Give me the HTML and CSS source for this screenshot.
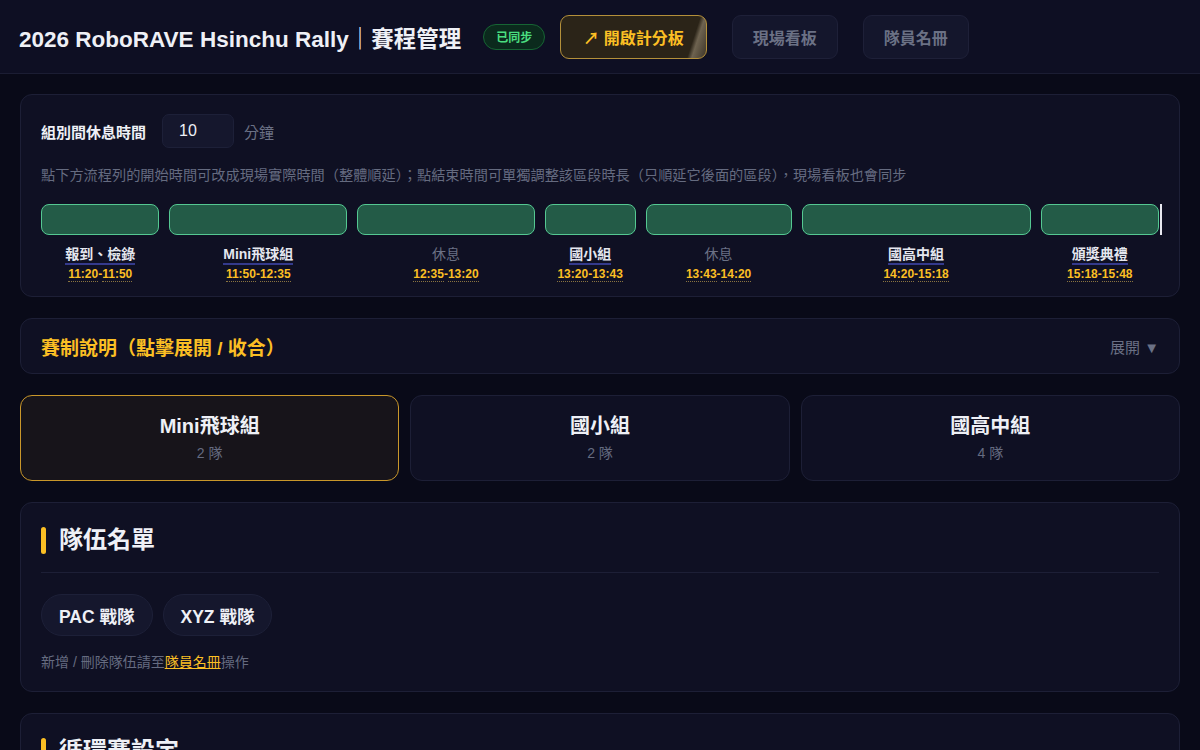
FILE: index.html
```html
<!DOCTYPE html>
<html lang="zh-Hant">
<head>
<meta charset="utf-8">
<title>賽程管理</title>
<link rel="stylesheet" href="styles.css">
</head>
<body>
<header class="topbar">
  <h1 class="title">2026 RoboRAVE Hsinchu Rally｜賽程管理</h1>
  <span class="sync-badge">已同步</span>
  <button class="btn btn-gold">↗ 開啟計分板</button>
  <button class="btn btn-muted">現場看板</button>
  <button class="btn btn-muted">隊員名冊</button>
</header>

<main class="main">
  <section class="card schedule">
    <div class="break-row">
      <span class="break-label">組別間休息時間</span>
      <input class="break-input" type="text" value="10">
      <span class="break-unit">分鐘</span>
    </div>
    <p class="hint">點下方流程列的開始時間可改成現場實際時間（整體順延）；點結束時間可單獨調整該區段時長（只順延它後面的區段），現場看板也會同步</p>
    <div class="timeline">
      <div class="seg" style="flex-grow:30">
        <div class="bar"></div>
        <div class="seg-name">報到、檢錄</div>
        <div class="seg-time"><span>11:20</span>-<span>11:50</span></div>
      </div>
      <div class="seg" style="flex-grow:45">
        <div class="bar"></div>
        <div class="seg-name">Mini飛球組</div>
        <div class="seg-time"><span>11:50</span>-<span>12:35</span></div>
      </div>
      <div class="seg" style="flex-grow:45">
        <div class="bar"></div>
        <div class="seg-name rest">休息</div>
        <div class="seg-time"><span>12:35</span>-<span>13:20</span></div>
      </div>
      <div class="seg" style="flex-grow:23">
        <div class="bar"></div>
        <div class="seg-name">國小組</div>
        <div class="seg-time"><span>13:20</span>-<span>13:43</span></div>
      </div>
      <div class="seg" style="flex-grow:37">
        <div class="bar"></div>
        <div class="seg-name rest">休息</div>
        <div class="seg-time"><span>13:43</span>-<span>14:20</span></div>
      </div>
      <div class="seg" style="flex-grow:58">
        <div class="bar"></div>
        <div class="seg-name">國高中組</div>
        <div class="seg-time"><span>14:20</span>-<span>15:18</span></div>
      </div>
      <div class="seg" style="flex-grow:30">
        <div class="bar"></div>
        <div class="seg-name">頒獎典禮</div>
        <div class="seg-time"><span>15:18</span>-<span>15:48</span></div>
      </div>
      <div class="now-marker"></div>
    </div>
  </section>

  <section class="card collapse">
    <span class="collapse-title">賽制說明（點擊展開 / 收合）</span>
    <span class="collapse-toggle">展開 ▼</span>
  </section>

  <div class="groups">
    <div class="group active">
      <div class="group-name">Mini飛球組</div>
      <div class="group-count">2 隊</div>
    </div>
    <div class="group">
      <div class="group-name">國小組</div>
      <div class="group-count">2 隊</div>
    </div>
    <div class="group">
      <div class="group-name">國高中組</div>
      <div class="group-count">4 隊</div>
    </div>
  </div>

  <section class="card teams">
    <h2 class="section-title">隊伍名單</h2>
    <div class="divider"></div>
    <div class="chips">
      <span class="chip">PAC 戰隊</span>
      <span class="chip">XYZ 戰隊</span>
    </div>
    <p class="note">新增 / 刪除隊伍請至<a class="link" href="#">隊員名冊</a>操作</p>
  </section>

  <section class="card teams">
    <h2 class="section-title">循環賽設定</h2>
  </section>
</main>
</body>
</html>
```

FILE: styles.css
```css
* { box-sizing: border-box; }

html, body {
  margin: 0;
  background: #090a18;
  color: #e5e7eb;
  font-family: "Liberation Sans", "Noto Sans CJK TC", sans-serif;
  overflow: hidden;
}

.topbar {
  height: 74px;
  display: flex;
  align-items: center;
  padding: 0 19px;
  background: #0e0f23;
  border-bottom: 1px solid #1b1d33;
}

.title {
  margin: 0;
  font-size: 22.5px;
  font-weight: 700;
  color: #eef0f6;
}

.sync-badge {
  margin-left: 22px;
  height: 26px;
  padding: 0 12px;
  display: inline-flex;
  align-items: center;
  border-radius: 13px;
  border: 1px solid #166534;
  background: #0b2a1d;
  color: #4ade80;
  font-size: 12px;
  font-weight: 700;
}

.btn {
  height: 44px;
  padding: 0 20px;
  border-radius: 9px;
  font-family: inherit;
  font-size: 16px;
  font-weight: 700;
  cursor: pointer;
}

.btn-gold {
  margin-left: 15px;
  padding: 0 22px;
  border: 1.5px solid #b4903a;
  color: #fbbf24;
  background: linear-gradient(108deg, #2b2418 0%, #2b2418 88%, #6e6350 91%, #3d3528 100%);
}

.btn-muted {
  margin-left: 25px;
  border: 1px solid #1e2038;
  background: #14162c;
  color: #6b7185;
}

.main {
  padding: 20px 20px 0;
  display: flex;
  flex-direction: column;
  gap: 21px;
}

.card {
  background: #0f1023;
  border: 1px solid #1d1f36;
  border-radius: 12px;
}

.schedule {
  padding: 19px 20px 14px;
}

.break-row {
  display: flex;
  align-items: center;
}

.break-label {
  font-size: 15px;
  font-weight: 700;
  color: #eef0f6;
}

.break-input {
  margin-left: 16px;
  width: 72px;
  height: 34px;
  padding: 0 16px;
  background: #15172d;
  border: 1px solid #1d2038;
  border-radius: 7px;
  color: #eef0f6;
  font-family: inherit;
  font-size: 16px;
}

.break-unit {
  margin-left: 10px;
  font-size: 15px;
  color: #6b7185;
}

.hint {
  margin: 18px 0 0;
  font-size: 14.2px;
  line-height: 19px;
  color: #656b80;
}

.timeline {
  position: relative;
  display: flex;
  gap: 10px;
  margin-top: 19px;
}

.seg {
  flex-basis: 0;
  display: flex;
  flex-direction: column;
  align-items: center;
  min-width: 0;
}

.bar {
  align-self: stretch;
  height: 31px;
  background: #235b47;
  border: 1.5px solid #55c892;
  border-radius: 8px;
}

.seg-name {
  margin-top: 10px;
  font-size: 14px;
  font-weight: 700;
  line-height: 18px;
  color: #e5e7ef;
  border-bottom: 2px solid #343a8c;
}

.seg-name.rest {
  font-weight: 400;
  color: #6b7185;
  border-bottom-color: transparent;
}

.seg-time {
  margin-top: 2px;
  font-size: 12px;
  font-weight: 700;
  color: #fbbf24;
  line-height: 15px;
}

.seg-time span {
  border-bottom: 1px dotted #8a7440;
}

.now-marker {
  position: absolute;
  left: calc(100% + 1px);
  top: 0;
  width: 2px;
  height: 31px;
  background: #e8e8f0;
}

.collapse {
  height: 56px;
  display: flex;
  align-items: center;
  justify-content: space-between;
  padding: 0 20px;
}

.collapse-title {
  font-size: 19px;
  font-weight: 700;
  color: #fbbf24;
}

.collapse-toggle {
  font-size: 15px;
  color: #6b7185;
}

.groups {
  display: grid;
  grid-template-columns: repeat(3, 1fr);
  gap: 11px;
}

.group {
  height: 86px;
  border: 1px solid #1d1f36;
  border-radius: 12px;
  background: #0f1023;
  display: flex;
  flex-direction: column;
  align-items: center;
  justify-content: center;
  gap: 6px;
}

.group.active {
  border-color: #c9972a;
  background: #17141a;
}

.group-name {
  font-size: 20px;
  font-weight: 700;
  color: #eef0f6;
  line-height: 24px;
}

.group-count {
  font-size: 14px;
  color: #656b80;
  line-height: 18px;
}

.teams {
  padding: 23px 20px 19px;
}

.section-title {
  margin: 0;
  display: flex;
  align-items: center;
  gap: 13px;
  font-size: 24px;
  font-weight: 700;
  color: #eef0f6;
  line-height: 28px;
}

.section-title::before {
  content: "";
  width: 5px;
  height: 27px;
  border-radius: 3px;
  background: #fbbf24;
}

.divider {
  margin-top: 18px;
  height: 1px;
  background: #1d1f36;
}

.chips {
  margin-top: 21px;
  display: flex;
  gap: 10px;
}

.chip {
  height: 42px;
  padding: 0 17px;
  display: inline-flex;
  align-items: center;
  border-radius: 21px;
  background: #15172d;
  border: 1px solid #1d2038;
  font-size: 17.5px;
  font-weight: 700;
  color: #eef0f6;
}

.note {
  margin: 16px 0 0;
  font-size: 14px;
  line-height: 20px;
  color: #656b80;
}

.link {
  color: #fbbf24;
  text-decoration: underline;
}
```
